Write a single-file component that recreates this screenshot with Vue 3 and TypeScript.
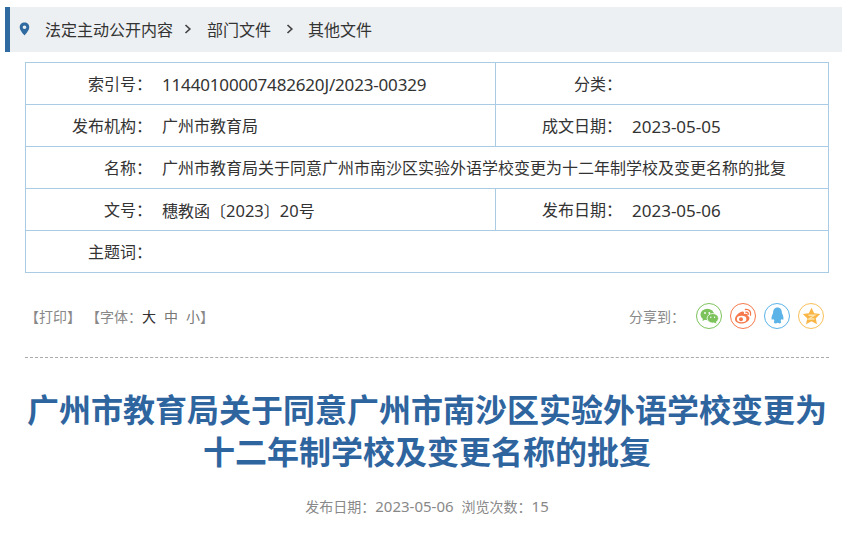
<script setup lang="ts">
</script>

<template>
  <div class="page">
    <div class="crumb">
      <svg class="pin" width="11" height="14" viewBox="0 0 12 15"><path fill-rule="evenodd" d="M6 0.500C2.900 0.500 0.800 2.800 0.800 5.500 0.800 8.600 4 12 6 14.500 8 12 11.200 8.600 11.200 5.500 11.200 2.800 9.100 0.500 6 0.500ZM6 3.600A2 2 0 1 1 6 7.600 2 2 0 1 1 6 3.600Z" fill="#2f6aa0"/></svg>
      <span>法定主动公开内容</span>
      <svg class="chev first" width="8" height="12" viewBox="0 0 8 12"><path d="M1.500 2 5.800 6 1.500 10" fill="none" stroke="#444" stroke-width="1.700"/></svg>
      <span>部门文件</span>
      <svg class="chev" width="8" height="12" viewBox="0 0 8 12"><path d="M1.500 2 5.800 6 1.500 10" fill="none" stroke="#444" stroke-width="1.700"/></svg>
      <span>其他文件</span>
    </div>
    <div class="meta">
      <div class="row"><div class="k">索引号：</div><div class="v half"><span class="num wide">11440100007482620J/2023-00329</span></div><div class="k2">分类：</div><div class="v2"></div></div>
      <div class="row"><div class="k">发布机构：</div><div class="v half">广州市教育局</div><div class="k2">成文日期：</div><div class="v2 num">2023-05-05</div></div>
      <div class="row"><div class="k">名称：</div><div class="v">广州市教育局关于同意广州市南沙区实验外语学校变更为十二年制学校及变更名称的批复</div></div>
      <div class="row"><div class="k">文号：</div><div class="v half">穗教函〔<span class="num2">2023</span>〕<span class="num2">20</span>号</div><div class="k2">发布日期：</div><div class="v2 num">2023-05-06</div></div>
      <div class="row"><div class="k">主题词：</div><div class="v"></div></div>
    </div>
    <div class="tools">
      <div class="left"><span>【打印】</span><span class="font">【字体：<b>大</b><i>中</i><i>小</i>】</span></div>
      <div class="share">
        <span class="slabel">分享到：</span>
        <span class="ic wx"><svg width="19" height="17" viewBox="0 0 19 17"><ellipse cx="7.300" cy="6.500" rx="6.800" ry="5.800" fill="#7cc35c"/><path d="M3 10l-.5 3 3.500-1.800z" fill="#7cc35c"/><ellipse cx="12.800" cy="10.300" rx="5.700" ry="4.800" fill="#7cc35c" stroke="#fff" stroke-width=".8"/><path d="M15.500 13.500l1.200 2-3-1z" fill="#7cc35c"/><circle cx="5" cy="5" r=".9" fill="#fff"/><circle cx="9.300" cy="5" r=".9" fill="#fff"/><circle cx="10.800" cy="9.300" r=".7" fill="#fff"/><circle cx="14.600" cy="9.300" r=".7" fill="#fff"/></svg></span>
        <span class="ic wb"><svg width="19" height="17" viewBox="0 0 19 17"><path d="M1 11c0-3.500 5.500-8 8-7.500 1.500.4 1 2 .8 2.700 2-.9 4.300-.6 3.800 1.700 1 .3 1.800 1 1.800 2.300 0 2.500-3.500 5.300-7.800 5.300C3.800 15.500 1 13.800 1 11Z" fill="#f6784a"/><ellipse cx="7.600" cy="11" rx="4.800" ry="3.300" fill="#fff"/><circle cx="7" cy="11.300" r="2" fill="#f6784a"/><path d="M11.500 1.500c3.300-.6 6 2.100 5 5.500M12 4.200c1.600-.3 2.600 1 2.100 2.400" fill="none" stroke="#f6784a" stroke-width="1.400" stroke-linecap="round"/></svg></span>
        <span class="ic qq"><svg width="17" height="18" viewBox="0 0 16 17"><path d="M8 .5C5 .5 3.800 3 3.800 6 2.800 8 2 10 2.500 11.800 3 12.500 3.800 11.200 4 11c.2.900.7 1.700 1.300 2.300C4 13.800 4.300 15.500 6 15.500c1 0 1.600-.4 2-.6.400.2 1 .6 2 .6 1.700 0 2-1.700.7-2.200.6-.6 1.100-1.400 1.300-2.300.2.200 1 1.500 1.500.8C14 10 13.200 8 12.200 6 12.200 3 11 .5 8 .5Z" fill="#5bb3e8"/></svg></span>
        <span class="ic qz"><svg width="19" height="18" viewBox="0 0 17 16"><path d="M8.500.6l2.400 5 5.400.7-4 3.700 1.100 5.400-4.900-2.700-4.900 2.700 1.100-5.400-4-3.700 5.400-.7z" fill="#f9b646"/><path d="M5.800 7.300h5.400L6 10.700h5.200" fill="none" stroke="#fde3b0" stroke-width="1.200"/></svg></span>
      </div>
    </div>
    <div class="dash"></div>
    <h1>广州市教育局关于同意广州市南沙区实验外语学校变更为<br>十二年制学校及变更名称的批复</h1>
    <div class="sub"><span>发布日期：<span class="snum">2023-05-06</span></span><span>浏览次数：<span class="snum">15</span></span></div>
  </div>
</template>

<style>
html, body { margin: 0; background: #fff; }
</style>
<style scoped>
.page { width: 842px; height: 534px; overflow: hidden; font-family: "Noto Sans", "Noto Sans CJK SC", sans-serif; color: #333; padding-top: 7px; box-sizing: border-box; }
.crumb { height: 45px; margin-left: 5px; background: #edf0f2; border-left: 5px solid #2f6aa0; display: flex; align-items: center; font-size: 16px; line-height: 44px; color: #333; padding-left: 9px; box-sizing: border-box; }
.crumb span { padding-top: 1px; }
.pin { margin-right: 15px; margin-top: -1px; }
.chev { margin: -1px 14px 0 15px; }
.chev.first { margin: -1px 15px 0 11px; }
.meta { margin: 10px 13px 0 25px; border: 1px solid #a9cbe4; border-bottom: 0; font-size: 16px; }
.row { height: 41px; display: flex; border-bottom: 1px solid #a9cbe4; line-height: 43px; }
.k { width: 126px; text-align: right; flex: none; }
.v { margin-left: 10px; flex: 1; white-space: nowrap; }
.v.half { flex: none; width: 333px; border-right: 1px solid #a9cbe4; }
.k2 { width: 126px; text-align: right; flex: none; }
.v2 { margin-left: 10px; flex: 1; }
.num { font-size: 17px; }
.num2 { font-size: 16.5px; }
.wide { letter-spacing: -.17px; }
.tools { height: 44px; margin: 21px 13px 0 25px; display: flex; justify-content: space-between; align-items: center; font-size: 14px; color: #888; }
.left { display: flex; }
.font { margin-left: 5px; }
.font b { font-weight: 400; color: #333; margin-right: 8px; }
.font i { font-style: normal; color: #777; margin-right: 8px; }
.font i:last-of-type { margin-right: 0; }
.share { display: flex; align-items: center; gap: 8px; padding-right: 5px; }
.slabel { margin-right: 3px; }
.ic { width: 24px; height: 24px; border-radius: 50%; border: 1px solid; display: flex; align-items: center; justify-content: center; }
.wx { border-color: #7cc35c; }
.wb { border-color: #f6784a; }
.qq { border-color: #5bb3e8; }
.qz { border-color: #f9c05a; }
.dash { margin: 19px 13px 0 25px; border-top: 1px dashed #aaa; }
h1 { margin: 31px 13px 0 25px; text-align: center; color: #2f659f; font-size: 32px; line-height: 42px; font-weight: 700; white-space: nowrap; }
.sub { margin: 23px 13px 0 25px; display: flex; justify-content: center; gap: 8px; font-size: 14px; color: #888; }
.snum { font-size: 15px; }
</style>
